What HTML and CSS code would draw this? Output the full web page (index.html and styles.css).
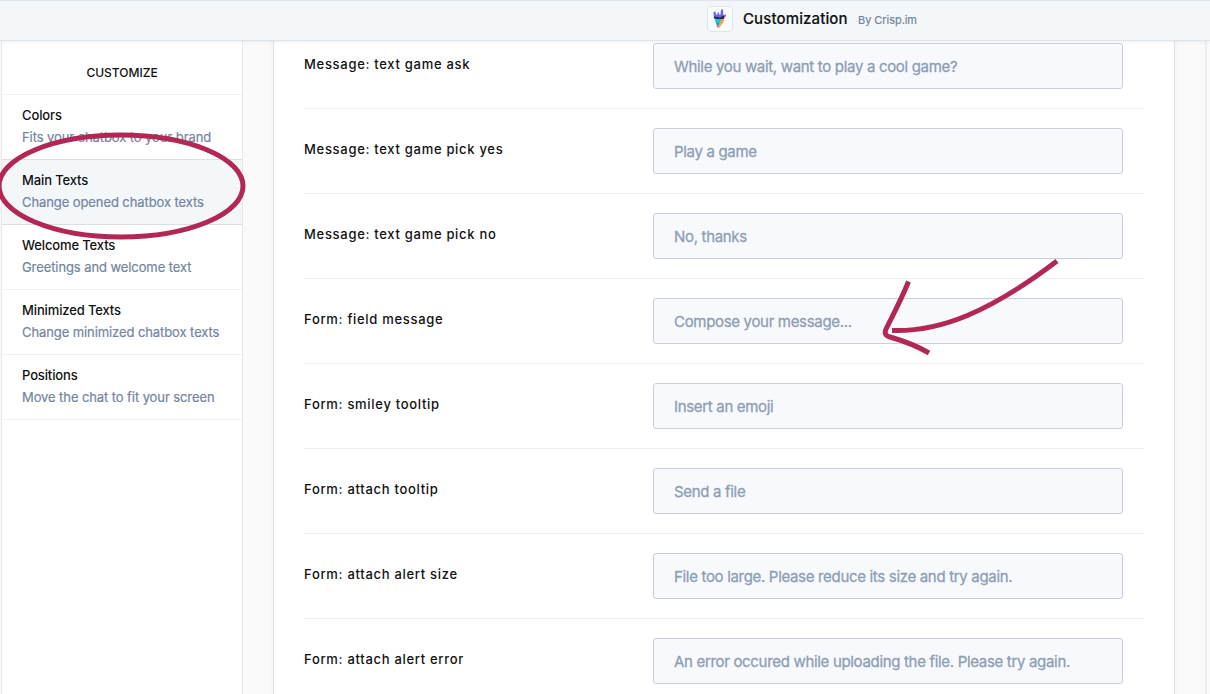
FILE: index.html
```html
<!DOCTYPE html>
<html lang="en">
<head>
<meta charset="utf-8">
<title>Customization</title>
<link rel="stylesheet" href="styles.css">
</head>
<body>
<div class="app">
  <header class="topbar">
    <span class="logo">
      <svg width="14" height="21" viewBox="0 0 14 21">
        <path fill="#6f66f7" d="M0.500 4L2.500 3.500 3 6.500H4.500V4.500L6 4.500V6.500H7.500L8 1.500H10L10.500 11H1z"/>
        <path fill="#1cc3d8" d="M1.500 10.500H9.500L7 15.500H3z"/>
        <path fill="#2596d6" d="M3 15H7L5.500 19.500H4.500z"/>
        <path fill="#f9a03a" d="M8.500 11L11.500 10.500 10.500 14 6 20 4.500 19.500z"/>
        <path fill="#2a2356" d="M1 8.500L7 9.500 11 7 12 8.500 10.500 11H4.500L1 10z"/>
        <path fill="#e4586c" d="M11 6.800L13 6.500 13 8.500 11.500 9z"/>
      </svg>
    </span>
    <h1 class="title">Customization</h1>
    <span class="author">By Crisp.im</span>
  </header>
  <div class="body">
    <nav class="sidebar">
      <h2 class="sidebar-title">CUSTOMIZE</h2>
      <a class="item"><b class="name">Colors</b><span class="desc">Fits your chatbox to your brand</span></a>
      <a class="item active"><b class="name">Main Texts</b><span class="desc">Change opened chatbox texts</span></a>
      <a class="item"><b class="name">Welcome Texts</b><span class="desc">Greetings and welcome text</span></a>
      <a class="item"><b class="name">Minimized Texts</b><span class="desc">Change minimized chatbox texts</span></a>
      <a class="item"><b class="name">Positions</b><span class="desc">Move the chat to fit your screen</span></a>
    </nav>
    <main class="content">
      <form class="card">
        <div class="row"><span class="label">Message: text game ask</span><div class="field">While you wait, want to play a cool game?</div></div>
        <div class="row"><span class="label">Message: text game pick yes</span><div class="field">Play a game</div></div>
        <div class="row"><span class="label">Message: text game pick no</span><div class="field">No, thanks</div></div>
        <div class="row"><span class="label">Form: field message</span><div class="field">Compose your message...</div></div>
        <div class="row"><span class="label">Form: smiley tooltip</span><div class="field">Insert an emoji</div></div>
        <div class="row"><span class="label">Form: attach tooltip</span><div class="field">Send a file</div></div>
        <div class="row"><span class="label">Form: attach alert size</span><div class="field">File too large. Please reduce its size and try again.</div></div>
        <div class="row"><span class="label">Form: attach alert error</span><div class="field">An error occured while uploading the file. Please try again.</div></div>
      </form>
    </main>
  </div>
  <svg class="annotations" width="1210" height="694" viewBox="0 0 1210 694">
    <ellipse cx="121" cy="186" rx="122" ry="51"/>
    <path d="M1057 261C990 312 940 332 892 330.500"/>
    <path d="M908.500 281.500C902 298 894 313 886.500 328C884 333 885 335.500 890 337C904 341 917 346 929 353"/>
  </svg>
</div>
</body>
</html>
```
FILE: styles.css
```css
* { box-sizing: border-box; }
body { margin: 0; font-family: Inter, "Liberation Sans", sans-serif; color: #111; }
.app { position: relative; width: 1210px; height: 694px; overflow: hidden; display: flex; flex-direction: column; }
.topbar { position: relative; z-index: 1; flex: none; height: 41px; display: flex; align-items: center; padding: 0 0 4px 707px; background: #f3f7fa; border-top: 1px solid #dfe4e8; border-bottom: 1px solid #dfe5ea; box-shadow: 0 1px 3px rgba(90, 110, 130, .1); white-space: nowrap; }
.logo { width: 26px; height: 26px; display: flex; align-items: center; justify-content: center; border: 1px solid #e1e4ea; border-radius: 4px; background: #fafbfd; }
.title { margin: 0 0 0 10px; width: 115px; font-size: 15px; font-weight: 500; line-height: 20px; letter-spacing: .12px; -webkit-text-stroke: .15px #111; }
.author { font-size: 11px; line-height: 20px; color: #74859d; padding-top: 2px; letter-spacing: -.05px; -webkit-text-stroke: .2px #74859d; }
.body { flex: 1; min-height: 0; display: flex; background: #fafafa; }
.sidebar { flex: none; width: 242px; margin-left: 1px; background: #fff; border-left: 1px solid #e3e6ea; border-right: 1px solid #e6e9ec; }
.sidebar-title { margin: 0; height: 54px; padding-top: 10px; line-height: 43px; text-align: center; font-size: 12px; font-weight: 500; border-bottom: 1px solid #f0f3f6; }
.item { display: flex; flex-direction: column; height: 65px; padding: 9px 20px 0; border-bottom: 1px solid #f0f3f6; font-size: 13px; line-height: 22px; white-space: nowrap; }
.item.active { background: #f3f7fa; border-bottom-color: #d8e0e6; box-shadow: 0 -1px #d8e0e6; }
.name { font-weight: 500; letter-spacing: -.13px; }
.desc { color: #74859d; letter-spacing: -.09px; -webkit-text-stroke: .2px #74859d; }
.content { flex: 1; padding: 0 35px 0 30px; overflow: hidden; display: flex; }
.content::after { content: ""; flex: none; width: 2px; margin-left: 30px; background: #eceef1; }
.card { flex: none; width: 902px; height: 720px; margin-top: -18px; padding: 1px 30px 0; background: #fff; border-left: 1px solid #dfe1e8; border-right: 1px solid #dfdfed; box-shadow: 0 0 5px rgba(90, 90, 120, .06); }
.row { display: flex; width: 840px; height: 85px; padding-top: 19px; border-bottom: 1px solid #eceef0; }
.label { width: 349px; padding-top: 11px; font-size: 13px; font-weight: 500; line-height: 20px; letter-spacing: .7px; }
.field { width: 470px; height: 46px; padding-left: 20px; border: 1px solid #c9cfda; border-radius: 3px; background: #f8f9fd; color: #8e9eb3; font-size: 15px; line-height: 46px; letter-spacing: -.32px; -webkit-text-stroke: .3px #8e9eb3; white-space: nowrap; }
.annotations { position: absolute; z-index: 2; left: 0; top: 0; fill: none; stroke: #b32755; stroke-width: 5; }
```
